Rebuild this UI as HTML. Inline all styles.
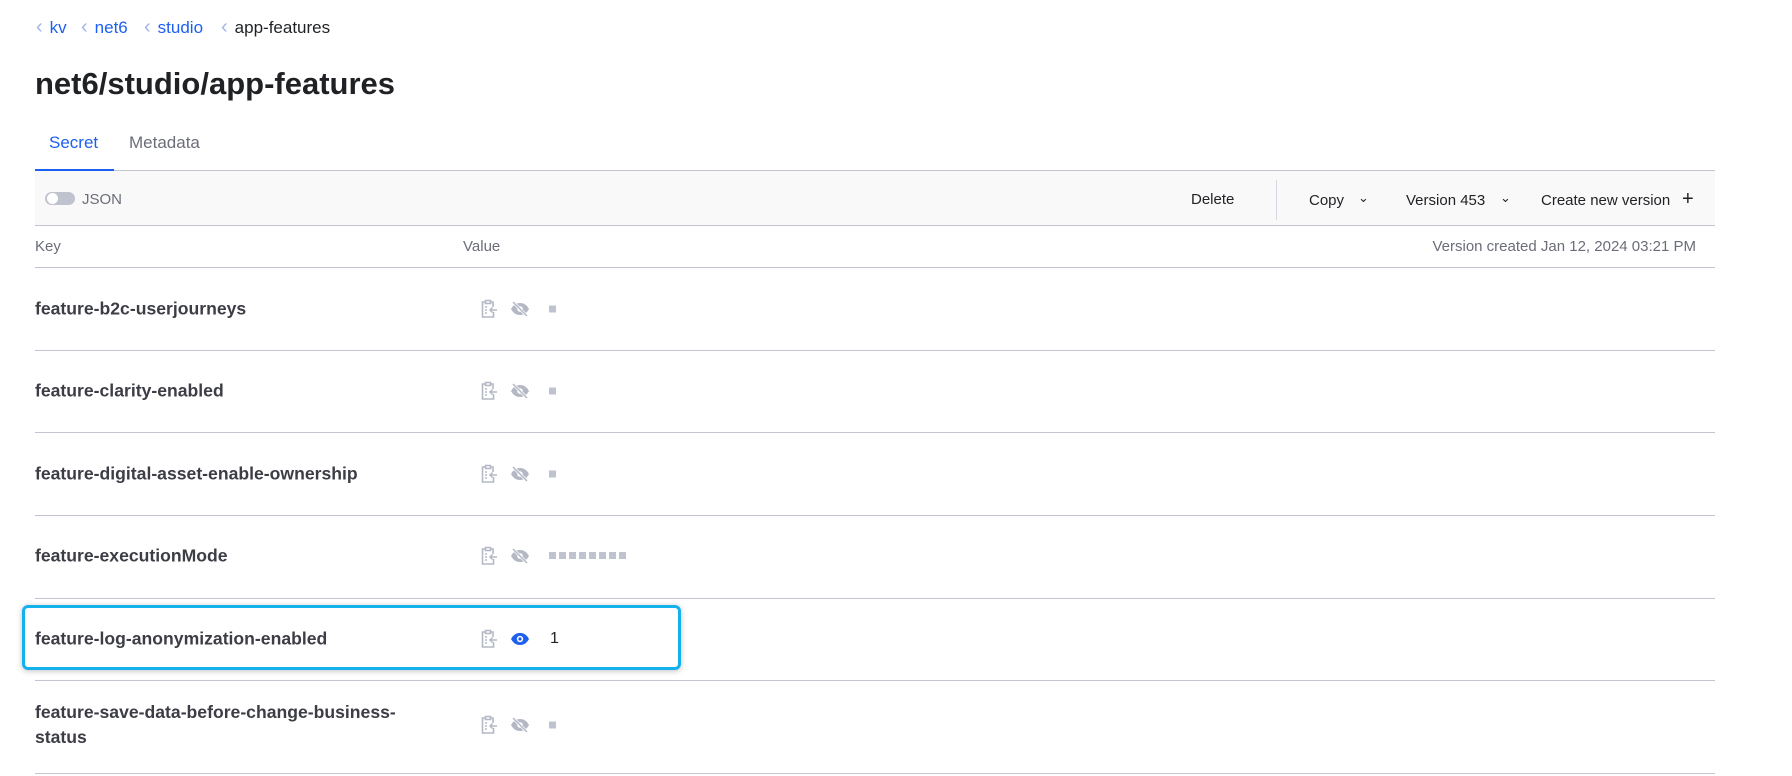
<!DOCTYPE html>
<html><head><meta charset="utf-8"><style>
*{margin:0;padding:0;box-sizing:border-box}
body{width:1792px;height:776px;background:#fff;font-family:"Liberation Sans",sans-serif;position:relative;overflow:hidden;color:#1f2124}
.a{position:absolute;white-space:nowrap}
.bc{top:18px;font-size:17px;color:#1d5ff0}
.chev{color:#9fb4e8;margin-right:7px;font-size:20px;line-height:17px}
.line{position:absolute;left:35px;width:1680px;height:1px;background:#c2c5d0}
.key{position:absolute;left:35px;font-size:17.6px;font-weight:bold;color:#3c3d45;transform:translateY(-50%);line-height:25px}
.ic{position:absolute;transform:translateY(-50%)}
.dot{position:absolute;width:7px;height:7px;background:#bfc3cf;transform:translateY(-50%)}
.tb{font-size:15px;color:#1f2124;top:192px}
</style></head><body>
<div class="a bc" style="left:36px"><span class="chev">‹</span>kv</div>
<div class="a bc" style="left:81px"><span class="chev">‹</span>net6</div>
<div class="a bc" style="left:144px"><span class="chev">‹</span>studio</div>
<div class="a bc" style="left:221px;color:#1f2124"><span class="chev">‹</span>app-features</div>
<div class="a" style="left:35px;top:66px;font-size:31px;font-weight:bold;color:#1f2124">net6/studio/app-features</div>
<div class="a" style="left:49px;top:133px;font-size:17px;color:#1d5ff0">Secret</div>
<div class="a" style="left:129px;top:133px;font-size:17px;color:#6b6e78">Metadata</div>
<div class="a" style="left:35px;top:170px;width:1680px;height:56px;background:#f9f9fa;border-top:1px solid #c2c5d0;border-bottom:1px solid #c2c5d0"></div>
<div class="a" style="left:35px;top:169px;width:79px;height:2px;background:#1d5ff0"></div>
<div class="a" style="left:45px;top:192px;width:30px;height:13px;border-radius:7px;background:#bfc3cd"></div>
<div class="a" style="left:47px;top:193px;width:11px;height:11px;border-radius:50%;background:#fff"></div>
<div class="a" style="left:82px;top:191px;font-size:15px;color:#6b6e78">JSON</div>
<div class="a tb" style="left:1191px;top:191px">Delete</div>
<div class="a" style="left:1276px;top:180px;width:1px;height:40px;background:#d6d8df"></div>
<div class="a tb" style="left:1309px">Copy</div>
<div class="a tb" style="left:1358px;top:190px;font-size:13px">⌄</div>
<div class="a tb" style="left:1406px">Version 453</div>
<div class="a tb" style="left:1500px;top:190px;font-size:13px">⌄</div>
<div class="a tb" style="left:1541px">Create new version</div>
<div class="a tb" style="left:1682px;top:188px;font-size:20px">+</div>
<div class="a" style="left:35px;top:238px;font-size:15px;color:#6b6e78">Key</div>
<div class="a" style="left:463px;top:238px;font-size:15px;color:#6b6e78">Value</div>
<div class="a" style="right:96px;top:238px;font-size:15px;color:#6b6e78">Version created Jan 12, 2024 03:21 PM</div>
<div class="line" style="top:267px"></div>
<div class="line" style="top:350px"></div>
<div class="line" style="top:432px"></div>
<div class="line" style="top:515px"></div>
<div class="line" style="top:598px"></div>
<div class="line" style="top:680px"></div>
<div class="line" style="top:773px"></div>

<div class="a" style="left:22px;top:605px;width:659px;height:65px;border:3px solid #14b1ec;border-radius:6px;box-shadow:0 1px 6px rgba(0,0,0,.25)"></div>

<svg width="0" height="0" style="position:absolute"><defs>
<symbol id="clip" viewBox="0 0 18 20"><path d="M5 3H2.5v15h11V13M13 8V3h-2.5M5.5 1.5h5v3h-5z" fill="none" stroke="#b4b8c4" stroke-width="1.6"/><path d="M5 8h2M5 11h2M5 14h2M17 11h-7M12.5 8.5L10 11l2.5 2.5" fill="none" stroke="#b4b8c4" stroke-width="1.5"/></symbol>
<symbol id="eyeoff" viewBox="0 0 20 20"><path d="M1 10c2.5-4.5 5.5-6 9-6s6.5 1.5 9 6c-2.5 4.5-5.5 6-9 6s-6.5-1.5-9-6z" fill="#b4b8c4"/><circle cx="10" cy="10" r="2.8" fill="#fff"/><path d="M3 3l14 14" stroke="#fff" stroke-width="3"/><path d="M3 3l14 14" stroke="#b4b8c4" stroke-width="1.5"/></symbol>
</defs></svg>

<div class="key" style="top:309px">feature-b2c-userjourneys</div>
<div class="key" style="top:391px">feature-clarity-enabled</div>
<div class="key" style="top:474px">feature-digital-asset-enable-ownership</div>
<div class="key" style="top:556px">feature-executionMode</div>
<div class="key" style="top:639px">feature-log-anonymization-enabled</div>
<div class="key" style="top:725px">feature-save-data-before-change-business-<br>status</div>

<svg class="ic" style="left:480px;top:309px" width="18" height="20"><use href="#clip"/></svg>
<svg class="ic" style="left:510px;top:309px" width="20" height="20"><use href="#eyeoff"/></svg>
<div class="dot" style="left:549px;top:309px"></div>

<svg class="ic" style="left:480px;top:391px" width="18" height="20"><use href="#clip"/></svg>
<svg class="ic" style="left:510px;top:391px" width="20" height="20"><use href="#eyeoff"/></svg>
<div class="dot" style="left:549px;top:391px"></div>

<svg class="ic" style="left:480px;top:474px" width="18" height="20"><use href="#clip"/></svg>
<svg class="ic" style="left:510px;top:474px" width="20" height="20"><use href="#eyeoff"/></svg>
<div class="dot" style="left:549px;top:474px"></div>

<svg class="ic" style="left:480px;top:556px" width="18" height="20"><use href="#clip"/></svg>
<svg class="ic" style="left:510px;top:556px" width="20" height="20"><use href="#eyeoff"/></svg>
<div class="a" style="left:549px;top:552px;display:flex;gap:3px">
<i style="width:7px;height:7px;background:#bfc3cf"></i><i style="width:7px;height:7px;background:#bfc3cf"></i><i style="width:7px;height:7px;background:#bfc3cf"></i><i style="width:7px;height:7px;background:#bfc3cf"></i><i style="width:7px;height:7px;background:#bfc3cf"></i><i style="width:7px;height:7px;background:#bfc3cf"></i><i style="width:7px;height:7px;background:#bfc3cf"></i><i style="width:7px;height:7px;background:#bfc3cf"></i></div>

<svg class="ic" style="left:480px;top:639px" width="18" height="20"><use href="#clip"/></svg>
<svg class="ic" style="left:510px;top:639px" width="20" height="20" viewBox="0 0 20 20"><path d="M1 10c2.5-4.5 5.5-6 9-6s6.5 1.5 9 6c-2.5 4.5-5.5 6-9 6s-6.5-1.5-9-6z" fill="#1d5ff0"/><circle cx="10" cy="10" r="3.2" fill="#fff"/><circle cx="10" cy="10" r="1.6" fill="#1d5ff0"/></svg>
<div class="a" style="left:550px;top:630px;font-size:16px;color:#1f2124">1</div>

<svg class="ic" style="left:480px;top:725px" width="18" height="20"><use href="#clip"/></svg>
<svg class="ic" style="left:510px;top:725px" width="20" height="20"><use href="#eyeoff"/></svg>
<div class="dot" style="left:549px;top:725px"></div>
</body></html>
